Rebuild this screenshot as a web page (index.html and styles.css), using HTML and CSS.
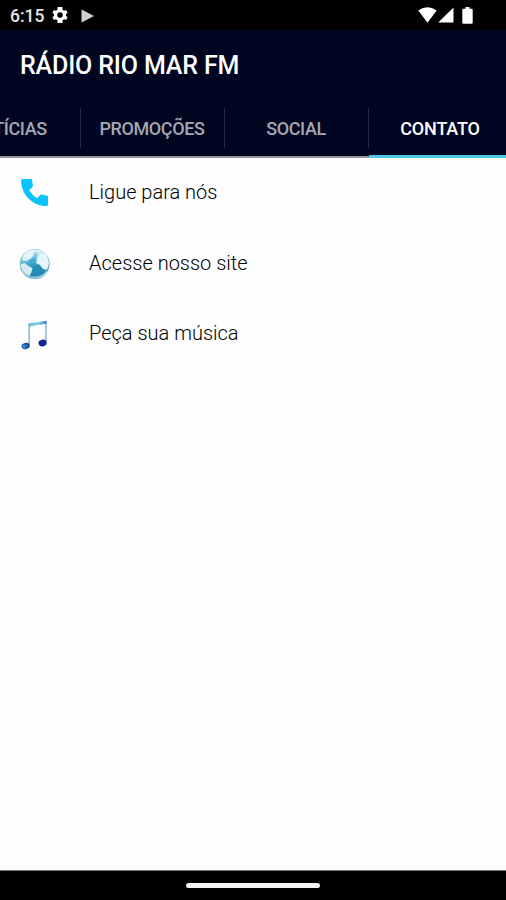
FILE: index.html
```html
<!DOCTYPE html>
<html lang="pt-BR">
<head>
<meta charset="utf-8">
<title>Rádio Rio Mar FM</title>
<link rel="stylesheet" href="styles.css">
</head>
<body>
<div class="status">
  <span class="clock">6:15</span>
  <svg class="gear" viewBox="2 2 20 20"><path fill="#fff" fill-rule="evenodd" d="M19.400 13a7.500 7.500 0 0 0 0-2l2.100-1.700-2-3.500-2.500 1a7.500 7.500 0 0 0-1.700-1L15 2H9l-.4 3.800a7.500 7.500 0 0 0-1.700 1l-2.400-1-2 3.500L4.600 11a7.500 7.500 0 0 0 0 2l-2.100 1.700 2 3.500 2.500-1a7.500 7.500 0 0 0 1.700 1L9 22h6l.4-3.800a7.500 7.500 0 0 0 1.700-1l2.400 1 2-3.500zM12 15.500a3.500 3.500 0 1 1 0-7 3.500 3.500 0 0 1 0 7z"/></svg>
  <svg class="play" viewBox="0 0 13 14"><path fill="#d2d2d2" d="M.5.500 13 7 .5 13.500z"/></svg>
  <span class="spacer"></span>
  <svg class="wifi" viewBox="0 0 19 16"><path fill="#fff" d="M.3 3.500Q9.500-3 18.700 3.500L9.500 15.700z"/></svg>
  <svg class="signal" viewBox="0 0 16 16"><path fill="#fff" d="M15.500.500v15H.3z"/></svg>
  <svg class="battery" viewBox="0 0 11 17"><path fill="#fff" d="M3.500 0h4v1.800h2q1.200 0 1.200 1.200v12.500q0 1.200-1.200 1.200h-8Q.3 16.700.3 15.500V3q0-1.200 1.200-1.200h2z"/></svg>
</div>
<header class="header">
  <h1 class="title">RÁDIO RIO MAR FM</h1>
  <nav class="tabs">
    <a class="tab"><span>NOTÍCIAS</span></a>
    <a class="tab"><span>PROMOÇÕES</span></a>
    <a class="tab"><span>SOCIAL</span></a>
    <a class="tab active"><span>CONTATO</span></a>
  </nav>
</header>
<main class="list">
  <a class="row">
    <svg class="icon" viewBox="0 0 32 32"><path fill="#08c4fc" d="M3.500 2h8.200q1.300 0 1.400 1.300.1 2.700.8 5 .3 1-.5 1.800l-3.200 3q3 5.500 8 8.100l3-3.100q.8-.8 1.800-.5 2.300.7 4.600.8 1.400.1 1.400 1.400v7.800q0 1.400-1.500 1.400C13.800 29 2.100 17.500 2.100 3.400Q2.100 2 3.500 2z"/></svg>
    <span class="label call">Ligue para nós</span>
  </a>
  <a class="row">
    <svg class="icon" viewBox="0 0 32 32">
      <defs>
        <linearGradient id="sea" x1=".3" x2=".6" y2="1"><stop offset="0" stop-color="#d4edf5"/><stop offset=".35" stop-color="#62c4dd"/><stop offset=".6" stop-color="#248fba"/><stop offset="1" stop-color="#2783b2"/></linearGradient>
        <linearGradient id="shine" x2="0" y2="1"><stop offset="0" stop-color="#e5f2f7" stop-opacity=".9"/><stop offset="1" stop-color="#fff" stop-opacity="0"/></linearGradient>
      </defs>
      <circle cx="15.700" cy="16" r="14.700" fill="url(#sea)" stroke="#92b5c9" stroke-width=".8"/>
      <path fill="#d3ecf4" d="M1.500 16.500l4-1.500 4 3 4 2-1 4-2 4q-6-2-8-7z"/>
      <path fill="#e3f5fa" d="M18 10l3-4 5-1q4 5 4 11l-2 6-4-1-3-4-4-2 1-3z"/>
      <path fill="#e0f2f8" d="M4 8q4-5 10-6l2 3-4 5-5 3-4-1z"/>
      <path fill="#38aacf" d="M15 3l4 2-2 6-4 5-3-3 4-4z"/>
      <ellipse cx="15.700" cy="7" rx="10.500" ry="5.500" fill="url(#shine)"/>
      <path fill="none" stroke="#9dd3e2" stroke-width="1.300" d="M3.500 23q4.500 6.500 12.200 6.500T28 23"/>
    </svg>
    <span class="label site">Acesse nosso site</span>
  </a>
  <a class="row">
    <svg class="icon" viewBox="0 0 32 32">
      <defs>
        <linearGradient id="beam"><stop offset="0" stop-color="#65b8d4"/><stop offset=".5" stop-color="#8bd4ea"/><stop offset="1" stop-color="#3985be"/></linearGradient>
        <radialGradient id="note" cx=".3" cy=".5" r=".7"><stop offset="0" stop-color="#3e9bd2"/><stop offset=".6" stop-color="#1757a5"/><stop offset="1" stop-color="#0d348b"/></radialGradient>
      </defs>
      <path fill="none" stroke="#79a9cf" stroke-width="1.300" d="M10.200 5v21M27 3v20.500"/>
      <path fill="url(#beam)" d="M9.600 4.300 27.700 1.800v3L9.600 7.500z"/>
      <ellipse cx="6.600" cy="27" rx="4.200" ry="3" transform="rotate(-15 6.600 27)" fill="url(#note)"/>
      <ellipse cx="23.600" cy="24" rx="4.100" ry="3.300" transform="rotate(-15 23.600 24)" fill="#10268f"/>
    </svg>
    <span class="label music">Peça sua música</span>
  </a>
</main>
<footer class="navbar"><span class="handle"></span></footer>
</body>
</html>
```
FILE: styles.css
```css
* { box-sizing: border-box; }
body {
  margin: 0;
  width: 506px;
  height: 900px;
  display: flex;
  flex-direction: column;
  overflow: hidden;
  background: #fefefe;
  font-family: Roboto, "Liberation Sans", sans-serif;
}
svg { display: block; flex: none; }
.status {
  height: 30px;
  flex: none;
  display: flex;
  align-items: flex-start;
  padding: 7px 33px 0 10px;
  background: #000;
}
.clock {
  width: 42px;
  color: #e4e4e4;
  font-size: 17.500px;
  font-weight: 500;
  line-height: 19px;
}
.gear { width: 16px; height: 16px; }
.play { width: 13px; height: 14px; margin: 2px 0 0 13px; }
.spacer { flex: 1; }
.wifi { width: 19px; height: 16px; }
.signal { width: 16px; height: 16px; margin-left: 1px; }
.battery { width: 11px; height: 17px; margin-left: 8px; }
.header {
  height: 128px;
  flex: none;
  display: flex;
  flex-direction: column;
  background: #000521;
}
.title {
  height: 70px;
  margin: 0;
  padding-left: 20px;
  color: #fff;
  font-size: 25px;
  font-weight: 500;
  line-height: 72px;
  letter-spacing: -0.150px;
  white-space: nowrap;
}
.tabs {
  height: 58px;
  display: flex;
  margin-left: -64px;
  background: linear-gradient(transparent 55px, #080b16 55px, #080b16 56.500px, #96949a 56.500px);
}
.tab {
  position: relative;
  width: 144px;
  height: 58px;
  flex: none;
  display: flex;
  justify-content: center;
  color: #a6a7b0;
  font-size: 18px;
  font-weight: 500;
  line-height: 58px;
  letter-spacing: -0.400px;
}
.tab + .tab::before {
  content: "";
  position: absolute;
  left: 0;
  top: 8px;
  width: 1px;
  height: 40px;
  background: #272b43;
}
.active { color: #fff; letter-spacing: -0.200px; }
.active::after {
  content: "";
  position: absolute;
  left: 1px;
  right: 0;
  bottom: 0;
  height: 3px;
  background: #4cc8e4;
}
.list { flex: 1; }
.row {
  height: 70.800px;
  display: flex;
  align-items: center;
  padding-left: 19px;
}
.icon { width: 32px; height: 32px; }
.label {
  margin: -3px 0 0 38px;
  color: #000;
  font-size: 20px;
  font-weight: 300;
  line-height: 30px;
  white-space: nowrap;
}
.navbar {
  height: 30px;
  flex: none;
  display: flex;
  justify-content: center;
  background: #000;
  border-top: 1px solid #777;
}
.handle {
  width: 134px;
  height: 5px;
  margin-top: 12px;
  border-radius: 3px;
  background: #f2f2f2;
}
```
